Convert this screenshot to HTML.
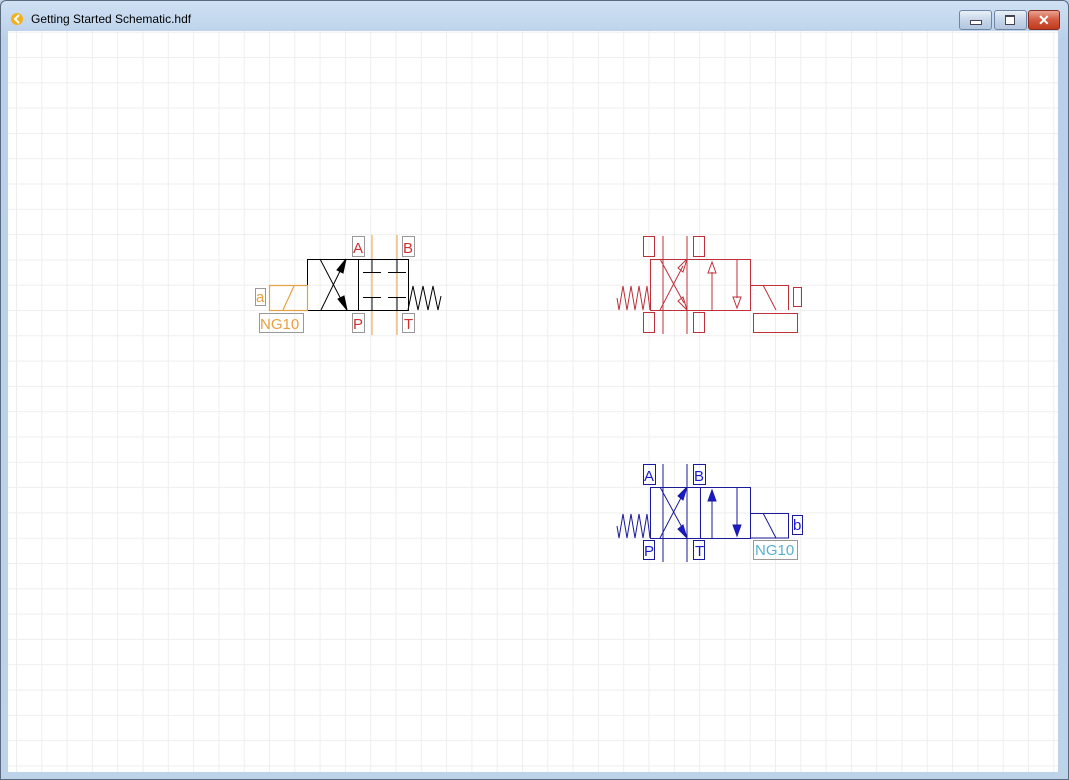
<!DOCTYPE html>
<html><head><meta charset="utf-8"><style>
html,body{margin:0;padding:0;width:1069px;height:780px;overflow:hidden;background:#bcd3ea}
.win{position:absolute;left:0;top:0;width:1067px;height:778px;border:1px solid #5a6a80;border-radius:6px 6px 0 0;background:linear-gradient(#cfe0f2,#b9d0ea 40px,#bcd3ea);}
.title{position:absolute;left:30px;top:11px;font:12px "Liberation Sans",sans-serif;color:#000}
.btn{position:absolute;top:9px;height:18px;border:1px solid #6e86a6;border-radius:3px;background:linear-gradient(#e9f0f8,#c7d6e9 50%,#b3c6de)}
.cv{position:absolute;left:7px;top:30px;width:1050px;height:741px;background:#fff}
text{font-family:"Liberation Sans",sans-serif}
</style></head><body>
<div class="win">
 <svg style="position:absolute;left:9px;top:11px" width="14" height="14"><circle cx="7" cy="7" r="6" fill="#f2b01c"/><path d="M9 3 L5 7 L9 11" stroke="#fff" stroke-width="2" fill="none"/></svg>
 <div class="title">Getting Started Schematic.hdf</div>
 <div class="btn" style="left:958px;width:31px"><div style="position:absolute;left:10px;top:9px;width:10px;height:3px;border:1px solid #445;background:#fff"></div></div>
 <div class="btn" style="left:993px;width:31px"><div style="position:absolute;left:10px;top:4px;width:8px;height:7px;border:1px solid #445;border-top-width:2px;background:#fff"></div></div>
 <div class="btn" style="left:1027px;width:30px;border-color:#8a2a1e;background:linear-gradient(#e8a393,#d25a3f 50%,#c0391d)"><div style="position:absolute;left:9px;top:1px;color:#fff;font:bold 14px 'Liberation Sans',sans-serif">✕</div></div>
 <div class="cv"></div>
</div>
<svg style="position:absolute;left:0;top:0" width="1069" height="780">
<defs>
 <pattern id="g" x="16" y="6.4" width="25.3" height="25.3" patternUnits="userSpaceOnUse">
  <path d="M0.5 0 V25.3 M0 0.5 H25.3" stroke="#eeeeee" stroke-width="1" fill="none"/>
 </pattern>
</defs>
<rect x="8" y="31" width="1050" height="741" fill="url(#g)"/>

<g fill="none" stroke-width="1">
 <line x1="372" y1="235" x2="372" y2="335" stroke="#e8a040"/>
 <line x1="397" y1="235" x2="397" y2="335" stroke="#e8a040"/>
 <rect x="307.5" y="259.5" width="101" height="51" stroke="#000"/>
 <line x1="358.5" y1="259" x2="358.5" y2="310" stroke="#000"/>
 <line x1="320" y1="259" x2="344" y2="305" stroke="#000"/>
 <line x1="321" y1="310" x2="343" y2="265" stroke="#000"/>
 <path d="M346 259 L337 270 L343 273 Z" fill="#000" stroke="#000"/>
 <path d="M347 310 L338 299 L344 296 Z" fill="#000" stroke="#000"/>
 <path d="M372 259 V272 M363 272.5 H381 M397 259 V272 M388 272.5 H406 M363 297.5 H381 M372 297 V310 M388 297.5 H406 M397 297 V310" stroke="#000"/>
 <path d="M408 310 L413 286 L418 310 L423 286 L428 310 L433 286 L438 310 L441 296" stroke="#000"/>
 <rect x="269.5" y="285.5" width="38" height="25" stroke="#e8a040" stroke-width="1.2"/>
 <line x1="283" y1="310" x2="294" y2="286" stroke="#e8a040" stroke-width="1.2"/>
 <rect x="255.5" y="288.5" width="10" height="17" stroke="#999"/>
 <rect x="259.5" y="313.5" width="44" height="19" stroke="#999"/>
 <rect x="352.5" y="236.5" width="12" height="20" stroke="#999"/>
 <rect x="402.5" y="236.5" width="12" height="20" stroke="#999"/>
 <rect x="352.5" y="313.5" width="12" height="19" stroke="#999"/>
 <rect x="402.5" y="313.5" width="12" height="19" stroke="#999"/>
</g>
<g font-size="15" fill="#e8a040"><text x="256" y="302">a</text><text x="260" y="329">NG10</text></g>
<g font-size="15" fill="#d03030"><text x="353" y="253">A</text><text x="403" y="253">B</text><text x="353" y="329">P</text><text x="404" y="329">T</text></g>

<g fill="none" stroke="#c0303a" stroke-width="1">
 <line x1="663" y1="236" x2="663" y2="334"/>
 <line x1="687" y1="236" x2="687" y2="334"/>
 <rect x="650.5" y="259.5" width="100" height="51"/>
 <line x1="660" y1="259" x2="684" y2="303"/>
 <path d="M687 310 L678 301 L683 297 Z"/>
 <line x1="660" y1="310" x2="683" y2="266"/>
 <path d="M687 259 L678 268 L683 272 Z"/>
 <line x1="712" y1="310" x2="712" y2="272"/>
 <path d="M712 262 L708 273 L716 273 Z"/>
 <line x1="737" y1="259" x2="737" y2="298"/>
 <path d="M737 308 L733 297 L741 297 Z"/>
 <path d="M750 285.5 H788.5 V310"/>
 <line x1="763" y1="285" x2="776" y2="310"/>
 <path d="M650 310 L647 286 L643 310 L639 286 L635 310 L631 286 L627 310 L623 286 L619 310 L617 298"/>
 <rect x="643.5" y="236.5" width="11" height="20"/>
 <rect x="693.5" y="236.5" width="11" height="20"/>
 <rect x="643.5" y="312.5" width="11" height="20"/>
 <rect x="693.5" y="312.5" width="11" height="20"/>
 <rect x="793.5" y="287.5" width="8" height="19"/>
 <rect x="753.5" y="313.5" width="44" height="19"/>
</g>

<g fill="none" stroke="#1a1a9a" stroke-width="1">
 <line x1="663" y1="464" x2="663" y2="562"/>
 <line x1="687" y1="464" x2="687" y2="562"/>
 <rect x="650.5" y="487.5" width="100" height="51"/>
 <line x1="700.5" y1="487" x2="700.5" y2="538"/>
 <line x1="660" y1="487" x2="684" y2="531"/>
 <path d="M687 538 L678 529 L683 525 Z" fill="#1a1acc"/>
 <line x1="660" y1="538" x2="683" y2="494"/>
 <path d="M687 487 L678 496 L683 500 Z" fill="#1a1acc"/>
 <line x1="712" y1="538" x2="712" y2="500"/>
 <path d="M712 490 L708 501 L716 501 Z" fill="#1a1acc"/>
 <line x1="737" y1="487" x2="737" y2="526"/>
 <path d="M737 536 L733 525 L741 525 Z" fill="#1a1acc"/>
 <path d="M750 513.5 H788.5 V538 H750"/>
 <line x1="763" y1="513" x2="776" y2="538"/>
 <path d="M650 538 L647 514 L643 538 L639 514 L635 538 L631 514 L627 538 L623 514 L619 538 L617 526"/>
 <rect x="643.5" y="464.5" width="12" height="20"/>
 <rect x="693.5" y="464.5" width="12" height="20"/>
 <rect x="643.5" y="540.5" width="11" height="19"/>
 <rect x="693.5" y="540.5" width="11" height="19"/>
 <rect x="792.5" y="515.5" width="10" height="19"/>
 <rect x="753.5" y="540.5" width="44" height="19" stroke="#999"/>
</g>
<g font-size="15" fill="#1a1acc"><text x="644" y="481">A</text><text x="694" y="481">B</text><text x="644" y="556">P</text><text x="695" y="556">T</text><text x="793" y="530">b</text></g>
<text x="755" y="555" font-size="15" fill="#5ab0d0">NG10</text>
</svg>
</body></html>
